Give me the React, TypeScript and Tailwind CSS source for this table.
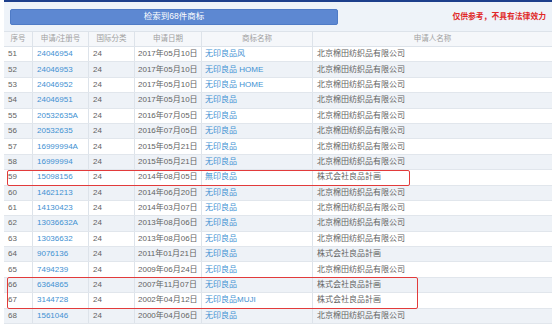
type Row = {
  no: number;
  regNo: string;
  cls: string;
  date: string;
  mark: string;
  owner: string;
};

const MT = '北京棉田纺织品有限公司';
const RP = '株式会社良品計画';

const rows: Row[] = [
  { no: 51, regNo: '24046954', cls: '24', date: '2017年05月10日', mark: '无印良品风', owner: MT },
  { no: 52, regNo: '24046953', cls: '24', date: '2017年05月10日', mark: '无印良品 HOME', owner: MT },
  { no: 53, regNo: '24046952', cls: '24', date: '2017年05月10日', mark: '无印良品 HOME', owner: MT },
  { no: 54, regNo: '24046951', cls: '24', date: '2017年05月10日', mark: '无印良品', owner: MT },
  { no: 55, regNo: '20532635A', cls: '24', date: '2016年07月05日', mark: '无印良品', owner: MT },
  { no: 56, regNo: '20532635', cls: '24', date: '2016年07月05日', mark: '无印良品', owner: MT },
  { no: 57, regNo: '16999994A', cls: '24', date: '2015年05月21日', mark: '无印良品', owner: MT },
  { no: 58, regNo: '16999994', cls: '24', date: '2015年05月21日', mark: '无印良品', owner: MT },
  { no: 59, regNo: '15098156', cls: '24', date: '2014年08月05日', mark: '無印良品', owner: RP },
  { no: 60, regNo: '14621213', cls: '24', date: '2014年06月20日', mark: '无印良品', owner: MT },
  { no: 61, regNo: '14130423', cls: '24', date: '2014年03月07日', mark: '无印良品', owner: MT },
  { no: 62, regNo: '13036632A', cls: '24', date: '2013年08月06日', mark: '无印良品', owner: MT },
  { no: 63, regNo: '13036632', cls: '24', date: '2013年08月06日', mark: '无印良品', owner: MT },
  { no: 64, regNo: '9076136', cls: '24', date: '2011年01月21日', mark: '无印良品', owner: RP },
  { no: 65, regNo: '7494239', cls: '24', date: '2009年06月24日', mark: '无印良品', owner: MT },
  { no: 66, regNo: '6364865', cls: '24', date: '2007年11月07日', mark: '无印良品', owner: RP },
  { no: 67, regNo: '3144728', cls: '24', date: '2002年04月12日', mark: '无印良品MUJI', owner: RP },
  { no: 68, regNo: '1561046', cls: '24', date: '2000年04月06日', mark: '无印良品', owner: MT },
];

// 列宽
const cols = 'grid grid-cols-[29px_56px_46px_67px_111px_1fr]';

export default function App() {
  return (
    <div
      className="relative w-[558px] h-[333px] bg-white overflow-hidden text-[8px] leading-none"
      style={{ fontFamily: '"Liberation Sans", "Noto Sans CJK SC", sans-serif' }}
    >
      <div className="ml-[4px] w-[548px] border-t-2 border-[#1d3f8c] bg-[#eef3f9]">
        {/* 顶部：检索结果按钮 + 提示 */}
        <div className="flex items-center justify-between h-[29px] pl-[6px] pr-[6px]">
          <div className="w-[328px] h-[16px] rounded-[2px] bg-[#5d88d2] border border-[#4f7bc6] flex items-center justify-center text-white text-[8.5px]">
            检索到68件商标
          </div>
          <div className="text-[#e02828] font-bold text-[7.8px]">仅供参考，不具有法律效力</div>
        </div>

        {/* 表头 */}
        <div className={`${cols} h-[16px] bg-[#f5f7fa] border-t border-b border-[#dde3ea] text-[#a0a0a0] text-[7.5px]`}>
          {['序号', '申请/注册号', '国际分类', '申请日期', '商标名称', '申请人名称'].map((h, i) => (
            <div
              key={h}
              className={`flex items-center justify-center ${i < 5 ? 'border-r border-[#dde3ea]' : ''}`}
            >
              {h}
            </div>
          ))}
        </div>

        {/* 数据行 */}
        {rows.map((r) => (
          <div
            key={r.no}
            className={`${cols} h-[15.4px] border-b border-[#e1e6ec] ${r.no % 2 === 0 ? 'bg-[#eef2f7]' : 'bg-white'} text-[#626262]`}
          >
            <div className="flex items-center pl-[4px] border-r border-[#dde3ea]">{r.no}</div>
            <div className="flex items-center pl-[4px] border-r border-[#dde3ea] text-[#4191d2]">{r.regNo}</div>
            <div className="flex items-center pl-[4px] border-r border-[#dde3ea]">{r.cls}</div>
            <div className="flex items-center pl-[3px] border-r border-[#dde3ea]">{r.date}</div>
            <div className="flex items-center pl-[3px] border-r border-[#dde3ea] text-[#4191d2]">{r.mark}</div>
            <div className="flex items-center pl-[4px]">{r.owner}</div>
          </div>
        ))}
      </div>

      {/* 红色标注框 */}
      <div className="absolute left-[7px] top-[170px] w-[403px] h-[16px] border-[1.5px] border-[#e23b3b] rounded-[2px]" />
      <div className="absolute left-[7px] top-[277px] w-[411px] h-[32px] border-[1.5px] border-[#e23b3b] rounded-[2px]" />
    </div>
  );
}
